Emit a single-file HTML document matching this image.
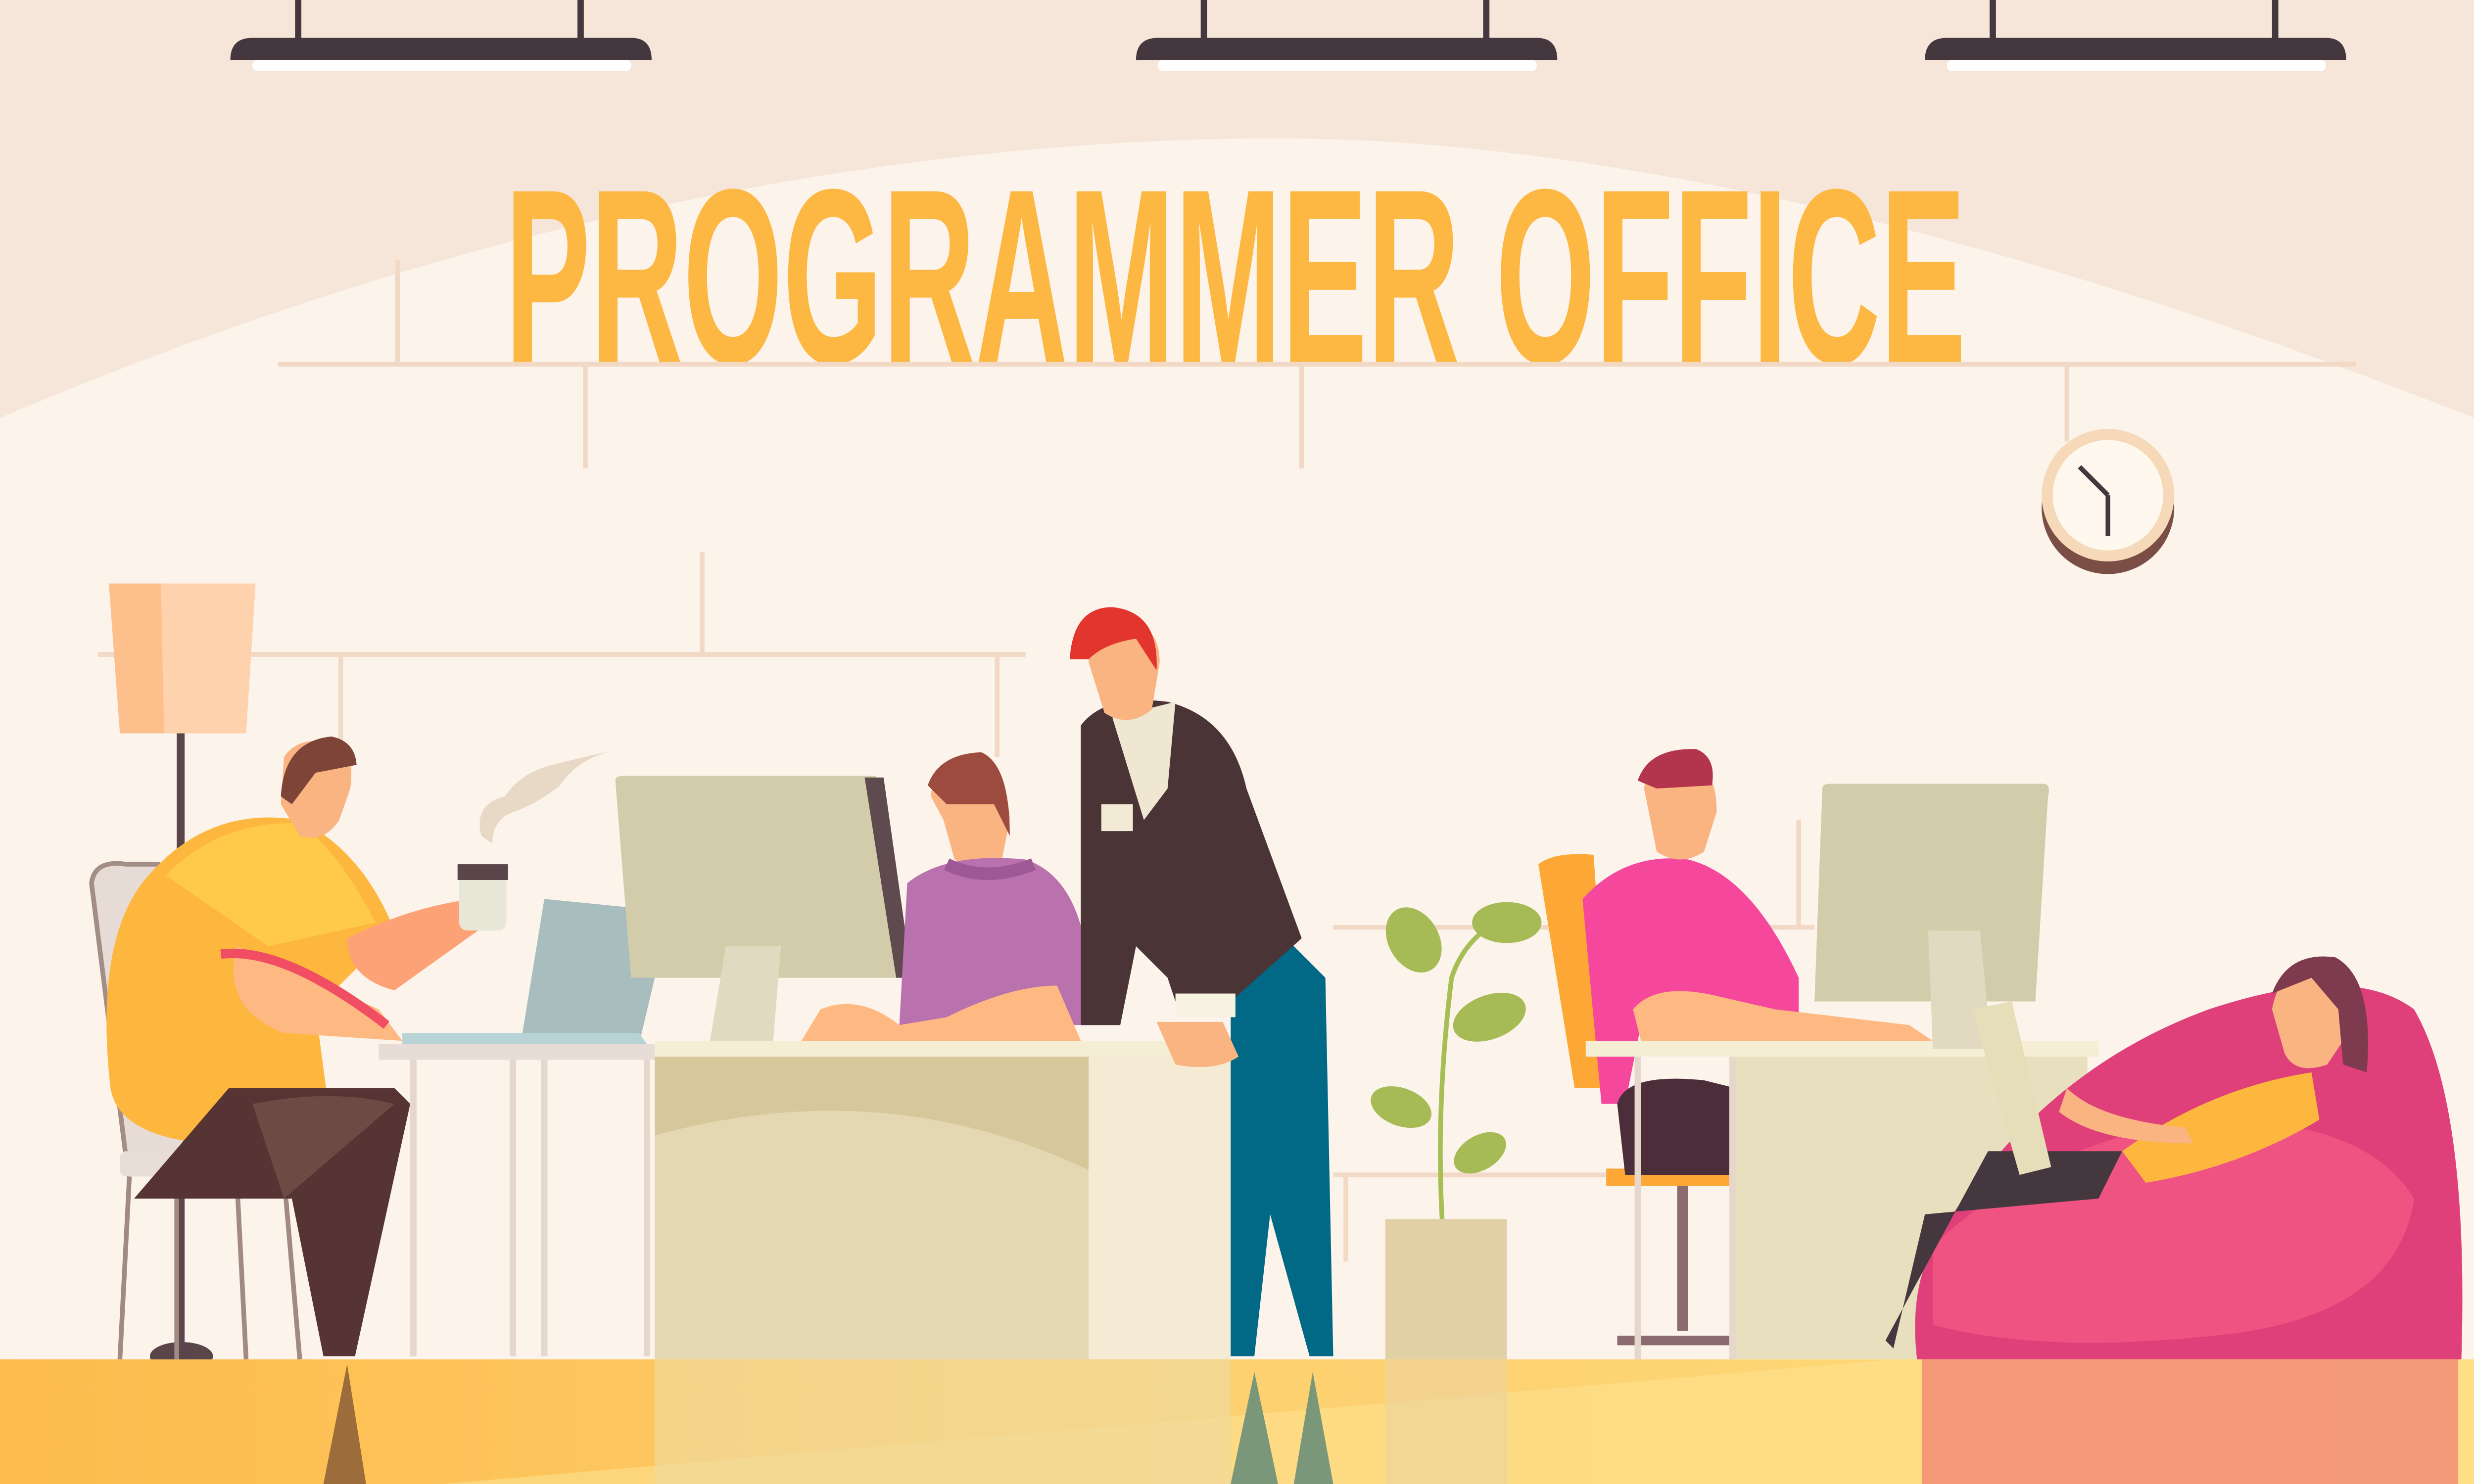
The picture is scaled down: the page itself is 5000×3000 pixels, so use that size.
<!DOCTYPE html>
<html><head><meta charset="utf-8"><style>html,body{margin:0;padding:0;overflow:hidden}svg{display:block}</style></head>
<body>
<svg width="5000" height="3000" viewBox="0 0 1568 941" preserveAspectRatio="none" xmlns="http://www.w3.org/2000/svg">
<defs>
<linearGradient id="fl" x1="0" y1="0" x2="1" y2="0"><stop offset="0" stop-color="#FDBB4C"/><stop offset="0.5" stop-color="#FDD070"/><stop offset="1" stop-color="#FEDC78"/></linearGradient>
</defs>
<rect width="1568" height="941" fill="#FCF3EB"/>
<path d="M0 0H1568V265Q1100 80 780 88Q400 95 0 265Z" fill="#F6E6DA"/>
<g fill="#45373E">
<rect x="187" y="0" width="4" height="24"/><rect x="366" y="0" width="4" height="24"/><path d="M146 38Q146 24 160 24H400Q413 24 413 38Z"/>
<rect x="761" y="0" width="4" height="24"/><rect x="940" y="0" width="4" height="24"/><path d="M720 38Q720 24 734 24H974Q987 24 987 38Z"/>
<rect x="1261" y="0" width="4" height="24"/><rect x="1440" y="0" width="4" height="24"/><path d="M1220 38Q1220 24 1234 24H1474Q1487 24 1487 38Z"/>
</g>
<g fill="#fff"><rect x="160" y="38" width="240" height="7" rx="3"/><rect x="734" y="38" width="240" height="7" rx="3"/><rect x="1234" y="38" width="240" height="7" rx="3"/></g>
<text x="320" y="230" font-family="Liberation Sans, sans-serif" font-weight="bold" font-size="158" fill="#FDB743" textLength="926" lengthAdjust="spacingAndGlyphs">PROGRAMMER OFFICE</text>
<g stroke="#F1D9C5" stroke-width="3" fill="none">
<path d="M176 231H1493M252 165V231M371 231V297M825 231V297M1310 231V280M62 415H650M445 350V415M216 415V470M632 415V480M845 588H1150M1140 520V588M845 745H1020M853 745V800"/>
</g>
<circle cx="1336" cy="322" r="42" fill="#7A4E45"/><circle cx="1336" cy="314" r="42" fill="#F6D9B8"/><circle cx="1336" cy="314" r="35" fill="#FFF8EE"/>
<path d="M1336 314L1318 296M1336 314V340" stroke="#45373E" stroke-width="3"/>
<rect x="112" y="465" width="5" height="395" fill="#5A454B"/>
<path d="M69 370H162L156 465H76Z" fill="#FFD2AE"/><path d="M69 370H102L104 465H76Z" fill="#FDBF8C"/>
<ellipse cx="115" cy="860" rx="20" ry="9" fill="#5A454B"/>
<rect x="0" y="862" width="1568" height="79" fill="url(#fl)"/>
<path d="M280 941L1200 862H1568V941Z" fill="#FEE190" opacity="0.6"/>
<path d="M58 560Q60 545 80 548H100Q110 550 108 570L118 735H80Z" fill="#E7DBD5" stroke="#A38E86" stroke-width="3"/>
<rect x="76" y="730" width="90" height="16" rx="4" fill="#E9DDD8"/>
<g stroke="#A08A82" stroke-width="3"><path d="M82 746L76 862M150 746L156 862M180 746L190 862M112 746V862"/></g>
<path d="M90 560Q130 510 190 520Q230 540 250 590L200 640L210 715L130 725Q75 720 70 690Q60 600 90 560Z" fill="#FDB73F"/>
<path d="M105 555Q140 520 190 522Q215 540 238 585L170 600Z" fill="#FFCA48"/>
<path d="M145 690H250L260 700L225 860H205L185 760H85Z" fill="#563433"/>
<path d="M160 700Q210 690 250 700L180 760Z" fill="#6E4A44"/>
<path d="M150 600Q140 640 180 655L255 660L240 640Z" fill="#FEB882"/>
<path d="M140 605Q180 600 245 650" stroke="#F24E63" stroke-width="6" fill="none"/>
<path d="M220 595Q260 575 300 570L310 585L250 628Q220 620 220 595Z" fill="#FDA277"/>
<path d="M180 480Q190 465 215 472Q225 478 222 500L215 520Q205 535 190 530L178 510Z" fill="#FAB482"/>
<path d="M178 505Q180 470 210 467Q225 470 226 485L200 490L185 510Z" fill="#7F4438"/>
<rect x="291" y="550" width="30" height="40" rx="5" fill="#E8E6D6"/><rect x="290" y="548" width="32" height="10" fill="#5A454B"/>
<path d="M305 530Q300 510 320 505Q330 490 350 485Q370 480 388 476Q365 482 355 498Q340 510 325 515Q312 520 312 535" fill="#E8D8C6"/>
<rect x="240" y="662" width="175" height="10" fill="#E8DDD6"/>
<g stroke="#E5D7CB" stroke-width="4"><path d="M262 672V860M325 672V860M345 672V860M410 672V860"/></g>
<path d="M345 570L425 578L405 662H330Z" fill="#A8BDBD"/><path d="M255 662H410L405 655H255Z" fill="#B8D3D5"/>
<rect x="415" y="660" width="370" height="10" fill="#F6EDD5"/>
<rect x="415" y="670" width="275" height="192" fill="#E4D8B3"/>
<path d="M415 670H690V742Q560 680 415 720Z" fill="#D6C89A"/>
<rect x="690" y="670" width="90" height="192" fill="#F5EBD4"/>
<path d="M390 495Q390 492 395 492H555L575 620H400Z" fill="#D3CCAA"/><path d="M548 493H560L578 620H568Z" fill="#5E4A4F"/>
<path d="M460 600H495L490 660H450Z" fill="#E1D9C0"/>
<path d="M590 505Q592 480 615 480Q638 485 640 520L635 545Q620 555 605 545L598 520Z" fill="#FAB482"/>
<path d="M588 498Q595 478 622 477Q640 485 640 530L630 510H600Z" fill="#9C4B3E"/>
<path d="M575 560Q600 540 650 545Q680 555 688 600L690 650H570Z" fill="#BA72AE"/>
<path d="M600 548Q625 560 655 548" stroke="#9E5896" stroke-width="8" fill="none"/>
<path d="M520 640Q545 630 570 650L600 645Q640 625 670 625L685 660H508Z" fill="#FEB882"/>
<path d="M780 600L815 595L840 620L845 860H830L805 770L795 860H780Z" fill="#016985"/>
<path d="M685 460Q700 440 740 445Q780 455 790 500L825 595L780 635L745 635L740 620L720 600L710 650H685Z" fill="#4A3436"/>
<path d="M705 455L745 445L740 500L725 520Z" fill="#EFE7D2"/>
<rect x="698" y="510" width="20" height="17" fill="#F2EAD5"/>
<path d="M690 420Q690 395 710 392Q735 395 735 420L730 450Q715 462 700 452Z" fill="#FAB482"/>
<path d="M678 418Q680 385 705 385Q735 388 733 425L720 405Q700 408 690 418Z" fill="#E1352E"/>
<rect x="745" y="630" width="38" height="15" fill="#F7F2E2"/>
<path d="M733 648H775L785 670Q770 680 745 675Z" fill="#FAB482"/>
<rect x="878" y="773" width="77" height="89" fill="#E1D0A6"/>
<path d="M914 773Q910 700 920 620Q930 590 960 580" stroke="#A7BE55" stroke-width="3" fill="none"/>
<g fill="#A6BB56"><ellipse cx="896" cy="596" rx="16" ry="22" transform="rotate(-30 896 596)"/><ellipse cx="955" cy="585" rx="22" ry="13"/><ellipse cx="944" cy="645" rx="24" ry="14" transform="rotate(-20 944 645)"/><ellipse cx="888" cy="702" rx="20" ry="12" transform="rotate(20 888 702)"/><ellipse cx="938" cy="731" rx="18" ry="11" transform="rotate(-30 938 731)"/></g>
<path d="M975 548Q985 540 1010 542L1020 690H998Z" fill="#FDA836"/>
<rect x="1018" y="741" width="78" height="11" fill="#FDA836"/>
<rect x="1063" y="752" width="7" height="92" fill="#8C6B6F"/>
<path d="M1025 850H1100" stroke="#8C6B6F" stroke-width="6"/>
<path d="M1003 570Q1030 540 1070 545Q1110 555 1140 620L1140 650L1040 650L1030 700H1015Z" fill="#F5489D"/>
<path d="M1025 700Q1030 680 1080 685L1100 690V745H1030Z" fill="#4C2E3A"/>
<path d="M1042 500Q1045 478 1065 478Q1088 482 1088 515L1080 540Q1065 550 1050 540Z" fill="#FAB482"/>
<path d="M1038 495Q1045 474 1075 475Q1088 480 1085 498L1050 500Z" fill="#B2354D"/>
<path d="M1035 640Q1050 622 1090 632L1125 640L1210 650L1225 660H1040Z" fill="#FEB882"/>
<rect x="1005" y="660" width="325" height="10" fill="#F6EDD5"/>
<rect x="1098" y="670" width="225" height="192" fill="#E8DFBF"/>
<g stroke="#E5D7CB" stroke-width="4"><path d="M1038 670V862M1098 670V862"/></g>
<path d="M1155 500Q1155 497 1160 497H1295Q1300 497 1298 505L1290 635H1150Z" fill="#D3CCAA"/>
<path d="M1222 590H1255L1262 665H1225Z" fill="#E1D9C0"/>
<path d="M1225 790Q1290 680 1400 640Q1490 610 1530 640Q1565 700 1560 862H1215Q1210 820 1225 790Z" fill="#E0407A"/>
<path d="M1225 790Q1300 720 1400 710Q1500 710 1530 760Q1520 830 1420 845Q1300 860 1225 840Z" fill="#EF5382"/>
<path d="M1195 850L1260 730H1345L1330 760L1220 770L1200 855Z" fill="#45373E"/>
<path d="M1250 640L1275 635L1300 740L1280 745Z" fill="#E6DDB9"/>
<path d="M1345 730Q1400 690 1465 680L1470 710Q1420 740 1360 750Z" fill="#FDB73F"/>
<path d="M1440 640Q1445 612 1470 615Q1490 625 1485 660L1475 675Q1455 682 1448 668Z" fill="#FAB482"/>
<path d="M1440 630Q1450 603 1480 607Q1505 620 1500 680L1485 675L1482 640L1465 620Z" fill="#7E3B50"/>
<path d="M1310 690Q1330 710 1385 715L1390 725Q1330 725 1305 705Z" fill="#FAB482"/>
<rect x="415" y="862" width="365" height="79" fill="#F0DA9B" opacity="0.7"/>
<rect x="1218" y="862" width="340" height="79" fill="#F07A73" opacity="0.7"/>
<rect x="878" y="862" width="77" height="79" fill="#EBD29E" opacity="0.6"/>
<path d="M205 941L220 865L232 941Z" fill="#9C6C3A"/>
<path d="M780 941L795 870L810 941Z M820 941L832 870L845 941Z" fill="#7A977A"/>
</svg>
</body></html>
